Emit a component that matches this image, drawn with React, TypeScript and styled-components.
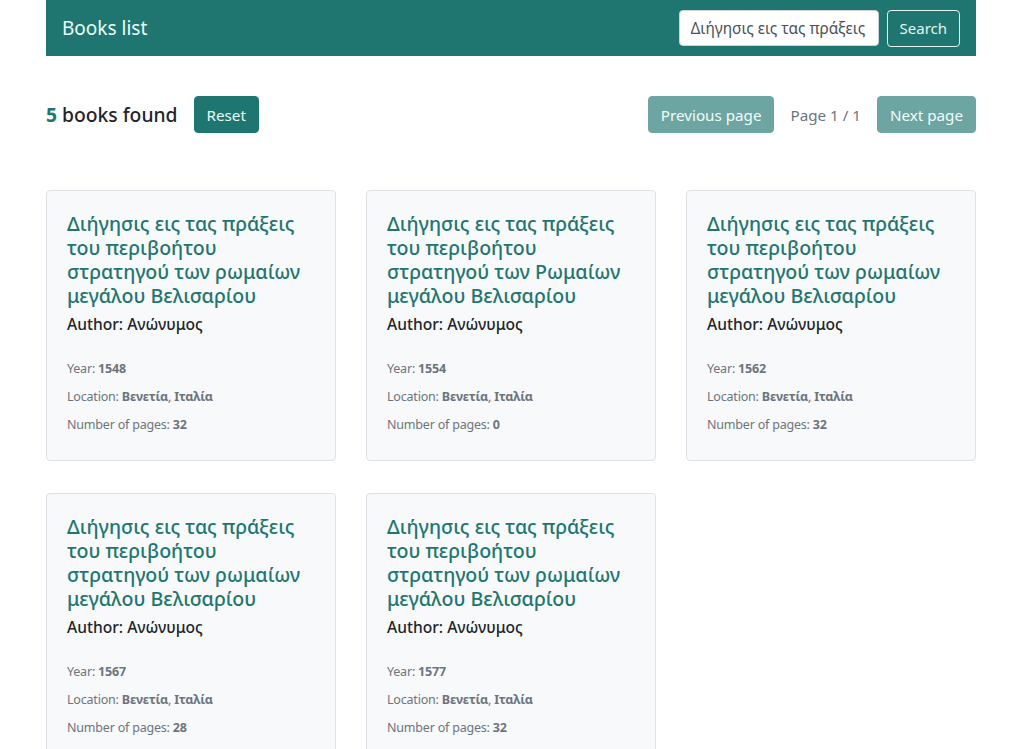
import React from "react";
import styled, { createGlobalStyle } from "styled-components";

const Global = createGlobalStyle`
  html, body { margin: 0; padding: 0; background: #fff; }
  body { font-family: "Noto Sans", "Open Sans", sans-serif; color: #212529; }
  * { box-sizing: border-box; }
`;

const Page = styled.div`
  width: 930px;
  margin-left: 46px;
`;

const Navbar = styled.nav`
  height: 56px;
  background: #1f7670;
  display: flex;
  align-items: center;
  justify-content: space-between;
  padding: 0 16px;
`;

const Brand = styled.span`
  color: #eafcf8;
  font-size: 19px;
`;

const SearchForm = styled.form`
  display: flex;
  align-items: center;
  gap: 8px;
`;

const SearchInput = styled.input`
  width: 200px;
  height: 36px;
  border: 1px solid #ced4da;
  border-radius: 4px;
  padding: 6px 11px;
  font-family: inherit;
  font-size: 15.4px;
  color: #495057;
  background: #fff;
  outline: none;
`;

const OutlineButton = styled.button`
  height: 37px;
  padding: 0 12px;
  border: 1px solid #e3f5f1;
  border-radius: 4px;
  background: transparent;
  color: #e3f5f1;
  font-family: inherit;
  font-size: 15px;
  cursor: pointer;
`;

const Toolbar = styled.div`
  display: flex;
  align-items: center;
  justify-content: space-between;
  margin-top: 40px;
  height: 37px;
`;

const Group = styled.div`
  display: flex;
  align-items: center;
`;

const Count = styled.h4`
  margin: 0 16px 0 0;
  font-size: 19.3px;
  font-weight: 500;
  color: #212529;
`;

const CountNum = styled.span`
  color: #1f7670;
  font-weight: 700;
`;

const TealButton = styled.button<{ $disabled?: boolean }>`
  height: 37px;
  padding: 0 12px;
  border: 1px solid #1f7670;
  border-radius: 4px;
  background: #1f7670;
  color: #e8fcf8;
  font-family: inherit;
  font-size: 15.2px;
  opacity: ${(p) => (p.$disabled ? 0.65 : 1)};
  cursor: ${(p) => (p.$disabled ? "default" : "pointer")};
`;

const PageLabel = styled.span`
  margin: 0 16px;
  color: #6c757d;
  font-size: 15.2px;
`;

const Grid = styled.div`
  display: grid;
  grid-template-columns: repeat(3, 290px);
  column-gap: 30px;
  row-gap: 32px;
  margin-top: 57px;
`;

const Card = styled.div`
  background: #f8f9fa;
  border: 1px solid #dee2e6;
  border-radius: 4px;
  padding: 21px 20px 20px;
  min-height: 271px;
`;

const Title = styled.h5`
  margin: 0 0 4px;
  font-size: 19.6px;
  line-height: 24px;
  font-weight: 500;
  color: #1f7670;
`;

const Author = styled.h6`
  margin: 0;
  font-size: 15.6px;
  line-height: 24px;
  font-weight: 500;
  color: #212529;
`;

const Details = styled.div`
  margin-top: 19px;
`;

const Detail = styled.div`
  font-size: 12.5px;
  line-height: 28px;
  color: #6c757d;
  letter-spacing: -0.2px;
`;

const Strong = styled.b`
  font-weight: 700;
`;

type Book = { title: string; year: number; pages: number };

const books: Book[] = [
  { title: "Διήγησις εις τας πράξεις του περιβοήτου στρατηγού των ρωμαίων μεγάλου Βελισαρίου", year: 1548, pages: 32 },
  { title: "Διήγησις εις τας πράξεις του περιβοήτου στρατηγού των Ρωμαίων μεγάλου Βελισαρίου", year: 1554, pages: 0 },
  { title: "Διήγησις εις τας πράξεις του περιβοήτου στρατηγού των ρωμαίων μεγάλου Βελισαρίου", year: 1562, pages: 32 },
  { title: "Διήγησις εις τας πράξεις του περιβοήτου στρατηγού των ρωμαίων μεγάλου Βελισαρίου", year: 1567, pages: 28 },
  { title: "Διήγησις εις τας πράξεις του περιβοήτου στρατηγού των ρωμαίων μεγάλου Βελισαρίου", year: 1577, pages: 32 },
];

export default function App() {
  return (
    <Page>
      <Global />
      <Navbar>
        <Brand>Books list</Brand>
        <SearchForm onSubmit={(e) => e.preventDefault()}>
          <SearchInput defaultValue="Διήγησις εις τας πράξεις" />
          <OutlineButton type="submit">Search</OutlineButton>
        </SearchForm>
      </Navbar>
      <Toolbar>
        <Group>
          <Count>
            <CountNum>5</CountNum> books found
          </Count>
          <TealButton>Reset</TealButton>
        </Group>
        <Group>
          <TealButton $disabled>Previous page</TealButton>
          <PageLabel>Page 1 / 1</PageLabel>
          <TealButton $disabled>Next page</TealButton>
        </Group>
      </Toolbar>
      <Grid>
        {books.map((b, i) => (
          <Card key={i}>
            <Title>{b.title}</Title>
            <Author>Author: Ανώνυμος</Author>
            <Details>
              <Detail>
                Year: <Strong>{b.year}</Strong>
              </Detail>
              <Detail>
                Location: <Strong>Βενετία</Strong>, <Strong>Ιταλία</Strong>
              </Detail>
              <Detail>
                Number of pages: <Strong>{b.pages}</Strong>
              </Detail>
            </Details>
          </Card>
        ))}
      </Grid>
    </Page>
  );
}
